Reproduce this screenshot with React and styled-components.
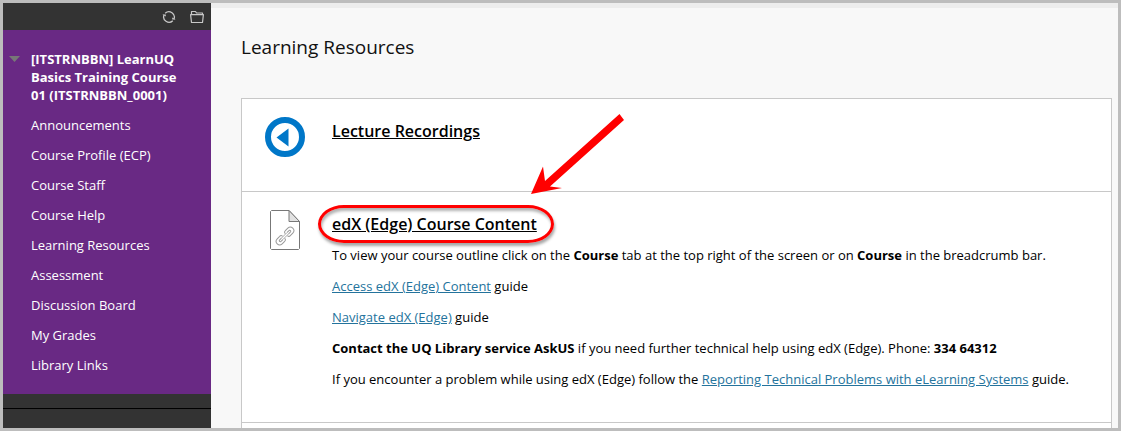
import styled, { createGlobalStyle } from "styled-components";

const GlobalStyle = createGlobalStyle`
  * {
    box-sizing: border-box;
  }

  body {
    margin: 0;
    font-family: "Open Sans", "Noto Sans", sans-serif;
    font-size: 13px;
    color: #000;
  }
`;

const Frame = styled.div`
  display: flex;
  min-height: 100vh;
  border: 3px solid #bdbdbd;
  background-color: #f8f8f8;
`;

const Sidebar = styled.aside`
  display: flex;
  flex-direction: column;
  flex: 0 0 208px;
  background-color: #333;
`;

const Toolbar = styled.div`
  display: flex;
  justify-content: flex-end;
  align-items: center;
  gap: 14px;
  height: 27px;
  padding-right: 7px;
`;

const IconButton = styled.button`
  display: flex;
  padding: 0;
  border: 0;
  background: none;
  color: #c8c8c8;
  cursor: pointer;
`;

const CourseMenu = styled.nav`
  padding: 20px 20px 14px 6px;
  background-color: #692984;
  color: #fff;
`;

const CourseHeader = styled.div`
  display: flex;
  align-items: flex-start;
  gap: 11px;
`;

const Toggle = styled.button`
  display: flex;
  padding: 6px 0 0;
  border: 0;
  background: none;
  cursor: pointer;
`;

const CourseTitle = styled.h2`
  margin: 0;
  font-size: 13px;
  font-weight: 700;
  line-height: 18px;
`;

const MenuList = styled.ul`
  margin: 6px 0 0;
  padding: 0 0 0 22px;
  list-style: none;
`;

const MenuLink = styled.a`
  display: block;
  line-height: 30px;
  color: #fff;
  text-decoration: none;

  &:hover {
    text-decoration: underline;
  }
`;

const SidebarFooter = styled.div`
  flex: 1;
  margin-top: 14px;
  border-top: 1px solid #000;
`;

const Main = styled.main`
  display: flex;
  flex-direction: column;
  flex: 1;
  min-width: 0;
  padding: 0 6px 0 30px;
  border-top: 5px solid #ededed;
`;

const PageTitle = styled.h1`
  margin: 24px 0 36px;
  font-size: 19px;
  font-weight: 400;
  line-height: 30px;
  color: #111;
`;

const ContentList = styled.ul`
  display: flex;
  flex-direction: column;
  flex: 1;
  margin: 0;
  padding: 0;
  border: 1px solid #c8c8c8;
  border-width: 1px 1px 0;
  background-color: #fff;
  list-style: none;
`;

const ContentItem = styled.li`
  display: flex;
  min-height: ${(props) => (props.$last ? "0" : "93px")};
  padding: ${(props) => (props.$last ? "0" : "17px 20px 33px 0")};
  border-bottom: ${(props) => (props.$last ? "0" : "1px solid #c8c8c8")};
`;

const ItemIcon = styled.div`
  display: flex;
  justify-content: center;
  align-items: flex-start;
  flex: 0 0 90px;
  padding: 1px 4px 0 0;
`;

const ItemBody = styled.div`
  min-width: 0;
`;

const ItemTitle = styled.h3`
  margin: 0;
  padding: 3px 0 9px;
  font-size: 16px;
  font-weight: 600;
  line-height: 24px;
`;

const TitleLink = styled.a`
  position: relative;
  color: #000;
  text-decoration: underline;
`;

const Ring = styled.span`
  position: absolute;
  inset: -8px -17px -8px -14px;
  border: 3px solid #f00;
  border-radius: 26px / 19px;
  box-shadow: 1px 3px 3px rgba(0, 0, 0, 0.35),
    inset 1px 3px 3px rgba(0, 0, 0, 0.3);
  pointer-events: none;
`;

const Arrow = styled.svg`
  position: absolute;
  right: -88px;
  bottom: 41px;
  pointer-events: none;
`;

const Paragraph = styled.p`
  margin: 0 0 11px;
  line-height: 20px;

  &:last-child {
    margin-bottom: 0;
  }
`;

const TextLink = styled.a`
  color: #24739c;
  text-decoration: underline;
`;

const menuItems = [
  "Announcements",
  "Course Profile (ECP)",
  "Course Staff",
  "Course Help",
  "Learning Resources",
  "Assessment",
  "Discussion Board",
  "My Grades",
  "Library Links",
];

const RefreshIcon = () => (
  <svg width="14" height="14" viewBox="0 0 14 14" fill="none">
    <path
      d="M3.2 3.2A5.4 5.4 0 0 1 11.9 9.2M10.8 10.8A5.4 5.4 0 0 1 2.1 4.8"
      stroke="currentColor"
      strokeWidth="1.3"
    />
    <path d="M0.3 4.4H3.8V6.6ZM13.7 9.6H10.2V7.4Z" fill="currentColor" />
  </svg>
);

const FolderIcon = () => (
  <svg
    width="14"
    height="14"
    viewBox="0 0 14 14"
    fill="none"
    stroke="currentColor"
    strokeWidth="1.2"
    strokeLinejoin="round"
  >
    <path d="M1.5 4.5V1.5H5.5L6.5 3H12.5V4.5M0.6 4.6H13.4L12.5 12.5H1.5Z" />
  </svg>
);

const BackIcon = () => (
  <svg width="40" height="40" viewBox="0 0 40 40">
    <circle cx="20" cy="20" r="17" fill="#fff" stroke="#0077c8" strokeWidth="6" />
    <path d="M11.5 20.5 23.5 11.5V29.5Z" fill="#0077c8" />
  </svg>
);

const LinkPageIcon = () => (
  <svg width="30" height="40" viewBox="0 0 30 40" fill="none">
    <path
      d="M1.5 0.5H19L29.5 11.5V38.5L28.5 39.5H1.5L0.5 38.5V1.5Z"
      fill="#fff"
      stroke="#777"
    />
    <path d="M19 0.5V11.5H29.5Z" fill="#e2e2e2" stroke="#777" />
    <g transform="rotate(-45 15 26)" stroke="#999">
      <path d="M13 24.5V23.5A2 2 0 0 0 11 22.5H7.5A3.5 3.5 0 0 0 7.5 29.5H11A2 2 0 0 0 13 28.5V27.5" />
      <path d="M11 25H8A1.1 1.1 0 0 0 8 27H11" />
      <path d="M17 24.5V23.5A2 2 0 0 1 19 22.5H22.5A3.5 3.5 0 0 1 22.5 29.5H19A2 2 0 0 1 17 28.5V27.5" />
      <path d="M19 25H22A1.1 1.1 0 0 1 22 27H19" />
      <path d="M11 25H19M11 27H19" strokeWidth="0.8" />
    </g>
  </svg>
);

const App = () => (
  <>
    <GlobalStyle />
    <Frame>
      <Sidebar>
        <Toolbar>
          <IconButton aria-label="Refresh">
            <RefreshIcon />
          </IconButton>
          <IconButton aria-label="Course folders">
            <FolderIcon />
          </IconButton>
        </Toolbar>
        <CourseMenu>
          <CourseHeader>
            <Toggle aria-label="Toggle course menu">
              <svg width="11" height="6" viewBox="0 0 11 6">
                <path d="M0 0H11L5.5 6Z" fill="#777" />
              </svg>
            </Toggle>
            <CourseTitle>
              [ITSTRNBBN] LearnUQ Basics Training Course 01 (ITSTRNBBN_0001)
            </CourseTitle>
          </CourseHeader>
          <MenuList>
            {menuItems.map((item) => (
              <li key={item}>
                <MenuLink href="#">{item}</MenuLink>
              </li>
            ))}
          </MenuList>
        </CourseMenu>
        <SidebarFooter />
      </Sidebar>
      <Main>
        <PageTitle>Learning Resources</PageTitle>
        <ContentList>
          <ContentItem>
            <ItemIcon>
              <BackIcon />
            </ItemIcon>
            <ItemBody>
              <ItemTitle>
                <TitleLink href="#">Lecture Recordings</TitleLink>
              </ItemTitle>
            </ItemBody>
          </ContentItem>
          <ContentItem>
            <ItemIcon>
              <LinkPageIcon />
            </ItemIcon>
            <ItemBody>
              <ItemTitle>
                <TitleLink href="#">
                  edX (Edge) Course Content
                  <Ring />
                  <Arrow width="94" height="80" viewBox="0 0 94 80">
                    <path d="M88.5 0 93 6 19 72.5 31 74 0 80 12 52.5 14 67Z" fill="#f00" />
                  </Arrow>
                </TitleLink>
              </ItemTitle>
              <Paragraph>
                To view your course outline click on the <b>Course</b> tab at the
                top right of the screen or on <b>Course</b> in the breadcrumb bar.
              </Paragraph>
              <Paragraph>
                <TextLink href="#">Access edX (Edge) Content</TextLink> guide
              </Paragraph>
              <Paragraph>
                <TextLink href="#">Navigate edX (Edge)</TextLink> guide
              </Paragraph>
              <Paragraph>
                <b>Contact the UQ Library service AskUS</b> if you need further
                technical help using edX (Edge). Phone: <b>334 64312</b>
              </Paragraph>
              <Paragraph>
                If you encounter a problem while using edX (Edge) follow the{" "}
                <TextLink href="#">
                  Reporting Technical Problems with eLearning Systems
                </TextLink>{" "}
                guide.
              </Paragraph>
            </ItemBody>
          </ContentItem>
          <ContentItem $last />
        </ContentList>
      </Main>
    </Frame>
  </>
);

export default App;
